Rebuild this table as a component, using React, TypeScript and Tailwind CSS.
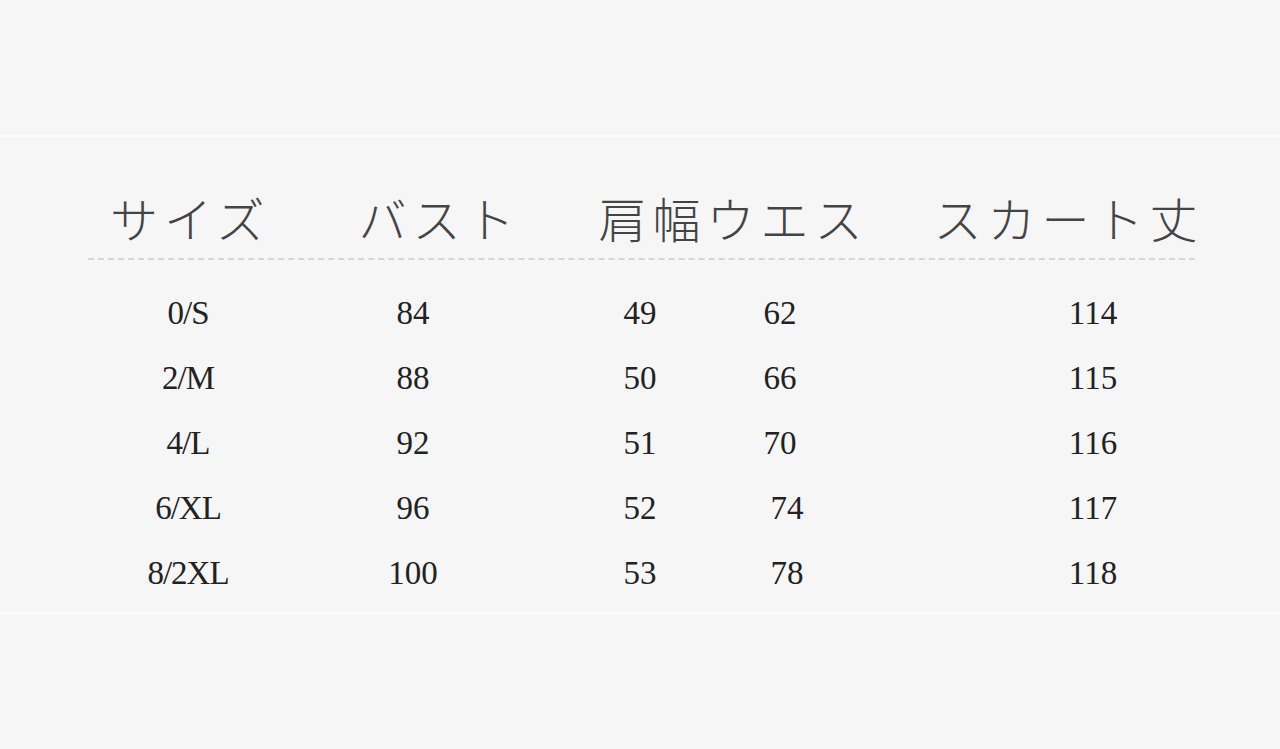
const headers = [
  { label: "サイズ", gap: "" },
  { label: "バスト", gap: "ml-[88px]" },
  { label: "肩幅ウエス", gap: "ml-[78px]" },
  { label: "スカート丈", gap: "ml-[65px]" },
];

const rows = [
  { size: "0/S", bust: "84", shoulder: "49", waist: "62", shift: false, length: "114" },
  { size: "2/M", bust: "88", shoulder: "50", waist: "66", shift: false, length: "115" },
  { size: "4/L", bust: "92", shoulder: "51", waist: "70", shift: false, length: "116" },
  { size: "6/XL", bust: "96", shoulder: "52", waist: "74", shift: true, length: "117" },
  { size: "8/2XL", bust: "100", shoulder: "53", waist: "78", shift: true, length: "118" },
];

export default function App() {
  return (
    <div className="w-[1280px] h-[749px] overflow-hidden bg-[#f6f6f6] flex flex-col">
      {/* top band */}
      <div className="h-[135px] shrink-0" />
      <div className="h-[2px] shrink-0 bg-[#fbfbfb]" />

      {/* header */}
      <div
        className="mt-[51px] flex pl-[110px] h-[58px] items-center text-[48px] leading-[58px] tracking-[6px] text-[#444]"
        style={{ fontFamily: '"Noto Sans CJK JP", "Noto Sans", sans-serif' }}
      >
        {headers.map((h) => (
          <span key={h.label} className={`${h.gap} font-light whitespace-nowrap`}>
            {h.label}
          </span>
        ))}
      </div>

      {/* dotted divider */}
      <div className="mt-[12px] ml-[88px] w-[1107px] border-t-2 border-dashed border-[#d6d6d6]" />

      {/* data rows */}
      <div
        className="mt-[21px] flex flex-col text-[33px] text-[#222]"
        style={{ fontFamily: '"Liberation Serif", "Times New Roman", serif' }}
      >
        {rows.map((r) => (
          <div key={r.size} className="flex h-[65px] items-center pl-[88px] leading-none">
            <div className="w-[200px] text-center tracking-[-1px]">{r.size}</div>
            <div className="w-[250px] text-center">{r.bust}</div>
            <div className="w-[204px] text-center">{r.shoulder}</div>
            <div className={`w-[76px] text-center ${r.shift ? "pl-[14px]" : ""}`}>{r.waist}</div>
            <div className="ml-[175px] w-[200px] text-center">{r.length}</div>
          </div>
        ))}
      </div>

      <div className="mt-[6px] h-[2px] shrink-0 bg-[#fbfbfb]" />
    </div>
  );
}
